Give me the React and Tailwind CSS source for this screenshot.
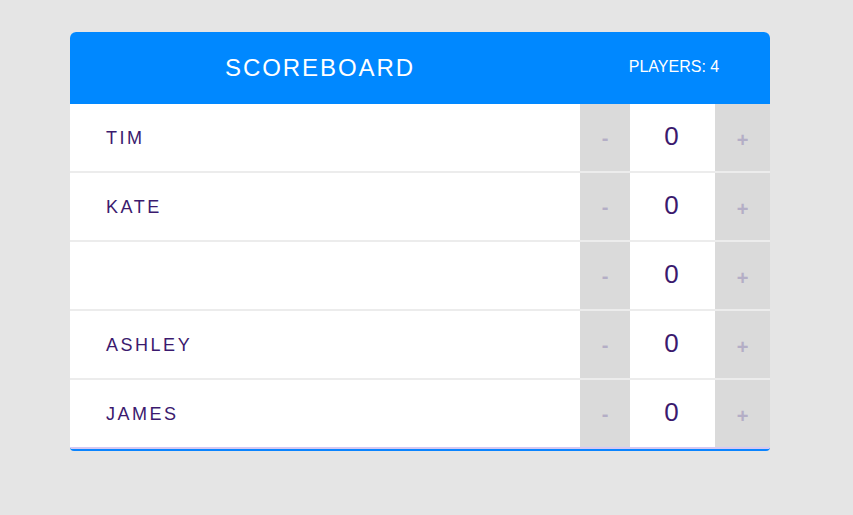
const players = [
  { name: "TIM", score: 0 },
  { name: "KATE", score: 0 },
  { name: "", score: 0 },
  { name: "ASHLEY", score: 0 },
  { name: "JAMES", score: 0 },
];

function Player({ player, last }) {
  return (
    <div
      className={`flex h-[69px] border-b-2 ${last ? "border-[#d6c8f2]" : "border-[#ececec]"}`}
    >
      <div className="flex-1 flex items-center pl-9 pt-px text-[18px] tracking-[0.14em] text-[#3b1a6e]">
        {player.name}
      </div>
      <button className="w-[50px] bg-[#dadada] text-[20px] font-bold text-[#b4aec6] flex items-center justify-center">
        -
      </button>
      <div className="w-[85px] flex items-center justify-center pb-[3px] pr-[2px] text-[26px] text-[#3b1a6e]">
        {player.score}
      </div>
      <button className="w-[55px] bg-[#dadada] text-[20px] font-bold text-[#b4aec6] flex items-center justify-center pt-1">
        +
      </button>
    </div>
  );
}

export default function App() {
  return (
    <div className="min-h-screen bg-[#e5e5e5] pt-8 font-['Liberation_Sans',Arial,sans-serif]">
      <div className="ml-[70px] w-[700px] bg-white rounded-t-md rounded-b-[4px] border-b-2 border-[#0a84ff] overflow-hidden">
        {/* Header */}
        <div className="flex h-[72px] items-center bg-[#0088ff] text-white">
          <h1 className="w-[500px] text-center text-[24px] tracking-[0.08em] font-normal">
            SCOREBOARD
          </h1>
          <div className="flex-1 text-center text-[16px] pl-[8px] pb-[2px]">PLAYERS: 4</div>
        </div>

        {/* Players */}
        {players.map((p, i) => (
          <Player key={i} player={p} last={i === players.length - 1} />
        ))}
      </div>
    </div>
  );
}
